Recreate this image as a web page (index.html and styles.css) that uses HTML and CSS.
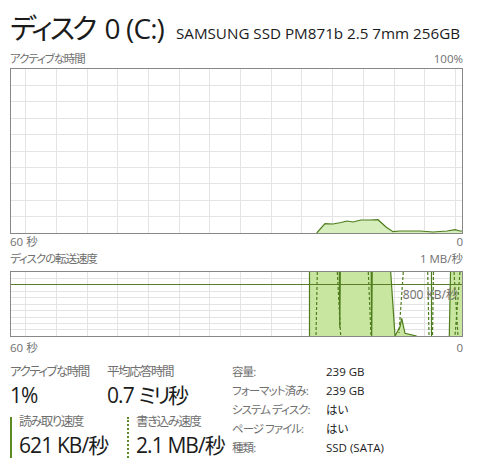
FILE: index.html
```html
<!DOCTYPE html>
<html lang="ja">
<head>
<meta charset="utf-8">
<title>ディスク 0 (C:)</title>
<link rel="stylesheet" href="styles.css">
</head>
<body>
<div class="page">
  <header class="head">
    <h1 class="title"><span class="kana">ディスク</span> 0 (C:)</h1>
    <span class="model">SAMSUNG SSD PM871b 2.5 7mm 256GB</span>
  </header>

  <div class="axis l1"><span class="jp">アクティブな時間</span><span>100%</span></div>
  <div class="chart c1">
    <svg class="plot" width="451" height="164" viewBox="0 0 451 164">
      <path class="grid" d="M14.5 0V164M45.5 0V164M76.5 0V164M106.5 0V164M137.5 0V164M168.5 0V164M198.5 0V164M229.5 0V164M260.5 0V164M290.5 0V164M321.5 0V164M352.5 0V164M383.5 0V164M413.5 0V164M444.5 0V164M0 16.5H451M0 32.5H451M0 49.5H451M0 65.5H451M0 82.5H451M0 98.5H451M0 114.5H451M0 131.5H451M0 147.5H451"/>
      <polygon class="area1" points="305.7,164 314,154.7 322,155 330,153.5 336,152 342,153 350,151 359,151 367,150.7 375,158 382,162.7 389,162 409,162 422,163 436,162 444,160.7 449,162 451,162 451,164"/>
      <polyline class="line" points="305.7,164 314,154.7 322,155 330,153.5 336,152 342,153 350,151 359,151 367,150.7 375,158 382,162.7 389,162 409,162 422,163 436,162 444,160.7 449,162 451,162"/>
    </svg>
  </div>
  <div class="axis b1"><span>60 秒</span><span>0</span></div>

  <div class="axis l2"><span class="jp">ディスクの転送速度</span><span>1 MB/秒</span></div>
  <div class="chart c2">
    <svg class="plot" width="451" height="64" viewBox="0 0 451 64">
      <path class="grid" d="M14.5 0V64M45.5 0V64M76.5 0V64M106.5 0V64M137.5 0V64M168.5 0V64M198.5 0V64M229.5 0V64M260.5 0V64M290.5 0V64M321.5 0V64M352.5 0V64M383.5 0V64M413.5 0V64M444.5 0V64M0 6.5H451M0 19.5H451M0 25.5H451M0 32.5H451M0 38.5H451M0 45.5H451M0 51.5H451M0 57.5H451"/>
      <polygon class="area2" points="298.5,64 298.5,0 379.7,0 384,64"/>
      <polygon class="area2" points="384,64 389,54.7 390.7,46.3 394,61.3 405.7,64"/>
      <polygon class="area2" points="438.3,64 439.5,0 451,0 451,64"/>
      <path class="scale" d="M0 12.5H451"/>
      <path class="line" d="M298.5 64V0M328.3 0L328.8 55.7L329.3 0M360.2 0L360.7 64L361.2 0M379.7 0L384 64L389 54.7L390.7 46.3L394 61.3L405.7 64M420.5 0V64M438.3 64L439.5 0"/>
      <path class="dash" d="M306.3 0L305 64M326.3 0L329.7 64M357.3 0L360 64M392.3 0L388 61M416.7 0L418 64M422.5 0L421.5 64M443 0L447 64M449 0L444 64"/>
    </svg>
    <span class="mark">800 KB/秒</span>
  </div>
  <div class="axis b2"><span>60 秒</span><span>0</span></div>

  <section class="stats">
    <div class="left">
      <div class="row">
        <div class="stat first">
          <div class="lbl">アクティブな時間</div>
          <div class="val">1%</div>
        </div>
        <div class="stat">
          <div class="lbl">平均応答時間</div>
          <div class="val">0.7 <span class="unit">ミリ秒</span></div>
        </div>
      </div>
      <div class="row rates">
        <div class="rate read">
          <div class="lbl">読み取り速度</div>
          <div class="val">621 KB/秒</div>
        </div>
        <div class="rate write">
          <div class="lbl">書き込み速度</div>
          <div class="val">2.1 MB/秒</div>
        </div>
      </div>
    </div>
    <dl class="props">
      <dt>容量:</dt><dd>239 GB</dd>
      <dt>フォーマット済み:</dt><dd>239 GB</dd>
      <dt><span class="jp">システム</span> <span class="jp">ディスク:</span></dt><dd>はい</dd>
      <dt><span class="jp">ページ</span> <span class="jp">ファイル:</span></dt><dd>はい</dd>
      <dt>種類:</dt><dd>SSD (SATA)</dd>
    </dl>
  </section>
</div>
</body>
</html>
```

FILE: styles.css
```css
html, body {
  margin: 0;
  background: #ffffff;
}

body {
  font-family: "Open Sans", "Noto Sans CJK JP", sans-serif;
  font-feature-settings: "palt";
  color: #1b1b1b;
}

.page {
  width: 453px;
  padding-left: 10px;
}

.head {
  height: 50px;
  display: flex;
  align-items: baseline;
  gap: 12px;
}

.title {
  margin: 0;
  font-size: 28px;
  font-weight: 400;
  line-height: 50px;
  padding-top: 3px;
  letter-spacing: -0.9px;
  white-space: nowrap;
}

.title .kana {
  letter-spacing: -3px;
  margin-right: 4px;
}

.model {
  font-size: 15.2px;
  white-space: nowrap;
}

.axis {
  display: flex;
  justify-content: space-between;
  font-size: 11.5px;
  color: #707070;
}

.axis .jp {
  letter-spacing: -1.1px;
}

.l1 { height: 18px; line-height: 18px; }
.b1 { height: 16px; line-height: 16px; }
.l2 { height: 21px; line-height: 17px; }
.b2 { height: 22px; line-height: 22px; }

.chart {
  position: relative;
  border: 1px solid #878787;
}

.c1 { height: 164px; }
.c2 { height: 64px; }

.plot {
  display: block;
}

.grid {
  fill: none;
  stroke: #e4e4e4;
  stroke-width: 1;
}

.area1 { fill: #d6eebc; }
.area2 { fill: #c9e6a1; }

.line {
  fill: none;
  stroke: #4e7d1d;
  stroke-width: 1.2;
}

.dash {
  fill: none;
  stroke: #4e7d1d;
  stroke-width: 1.2;
  stroke-dasharray: 3 2;
}

.scale {
  fill: none;
  stroke: #5a7d2a;
  stroke-width: 1.2;
}

.mark {
  position: absolute;
  right: 4px;
  top: 16px;
  font-size: 12px;
  line-height: 14px;
  color: #707070;
}

.stats {
  display: flex;
}

.left {
  width: 222px;
}

.row {
  display: flex;
}

.stat.first {
  width: 97px;
}

.lbl {
  font-size: 12.5px;
  letter-spacing: -1.5px;
  color: #707070;
  line-height: 20px;
  padding-top: 3px;
  white-space: nowrap;
}

.val {
  font-size: 21px;
  letter-spacing: -0.9px;
  line-height: 26px;
  white-space: nowrap;
}

.val .unit {
  letter-spacing: -2.5px;
}

.rates {
  margin-top: 9px;
}

.rate {
  padding-left: 7px;
}

.rate .lbl {
  line-height: 10px;
  padding-top: 0;
}

.rate .val {
  margin-top: 5px;
}

.read {
  width: 108px;
  border-left: 2px solid #5e8a25;
}

.write {
  border-left: 2px dotted #5e8a25;
}

.props {
  margin: 0;
  padding-top: 4px;
  display: grid;
  grid-template-columns: 94px auto;
  font-size: 11.5px;
  line-height: 17.5px;
}

.props dt {
  color: #707070;
  letter-spacing: -0.9px;
  white-space: nowrap;
}

.props dt .jp {
  letter-spacing: -1px;
}

.props dd {
  margin: 0;
  color: #1b1b1b;
}
```
